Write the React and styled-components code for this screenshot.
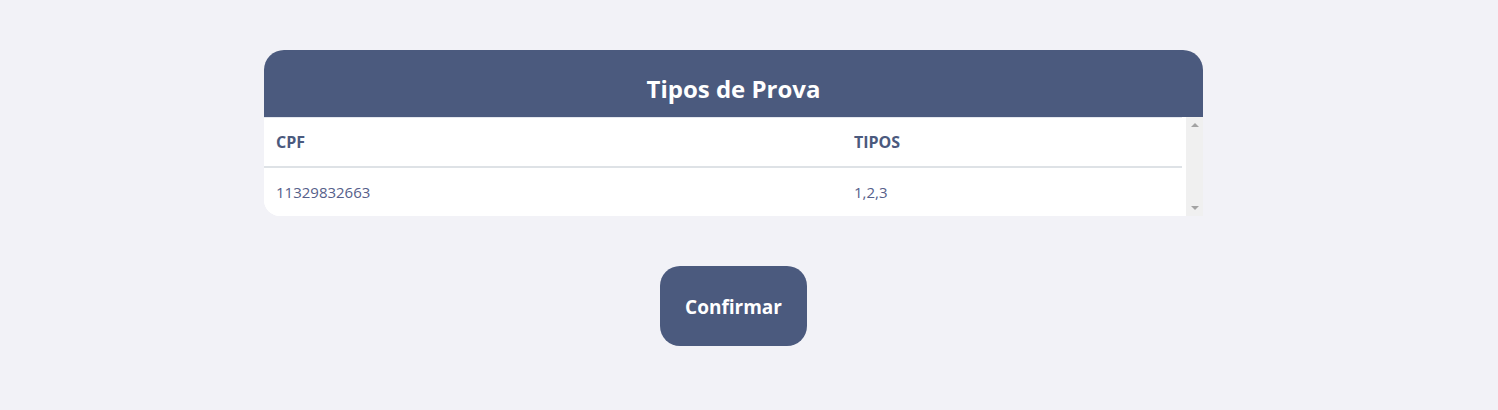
import React from "react";
import styled, { createGlobalStyle } from "styled-components";

const GlobalStyle = createGlobalStyle`
  html, body {
    margin: 0;
    padding: 0;
    background: #f2f2f7;
    font-family: "Open Sans", "Noto Sans", sans-serif;
  }
`;

const Page = styled.main`
  padding: 50px 295px 0 264px;
  display: flex;
  flex-direction: column;
  align-items: center;
`;

const Card = styled.section`
  width: 939px;
  background: #ffffff;
  border-radius: 20px 20px 0 16px;
  overflow: hidden;
`;

const CardHeader = styled.header`
  height: 67px;
  background: #4b5a7e;
  display: flex;
  align-items: center;
  justify-content: center;
`;

const Title = styled.h2`
  margin: 0;
  padding-top: 11px;
  color: #ffffff;
  font-size: 24px;
  font-weight: 700;
  line-height: 1;
`;

const TableFrame = styled.div`
  display: flex;
  height: 99px;
`;

const TableScroll = styled.div`
  flex: 1;
  padding-right: 4px;
  background: #ffffff;
  overflow: hidden;
`;

const Table = styled.table`
  width: 100%;
  border-collapse: collapse;
  color: #4b5a7e;
  font-size: 15px;
`;

const HeadCell = styled.th`
  text-align: left;
  font-size: 16px;
  font-weight: 700;
  height: 49px;
  padding: 1px 12px 0;
  border-top: 1px solid #e4e7ee;
  border-bottom: 2px solid #dee2e6;
  width: ${(p) => p.$width || "auto"};
  box-sizing: border-box;
`;

const BodyCell = styled.td`
  height: 48px;
  padding: 2px 12px 0;
  font-weight: 400;
  color: #56608a;
  box-sizing: border-box;
`;

const ScrollTrack = styled.div`
  width: 17px;
  background: #f0f0f0;
  display: flex;
  flex-direction: column;
  justify-content: space-between;
  align-items: center;
  padding: 6px 0;
  box-sizing: border-box;
`;

const Arrow = styled.span`
  width: 0;
  height: 0;
  border-left: 4px solid transparent;
  border-right: 4px solid transparent;
  ${(p) =>
    p.$down
      ? "border-top: 4px solid #a3a3a3;"
      : "border-bottom: 4px solid #a3a3a3;"}
`;

const ConfirmButton = styled.button`
  margin-top: 50px;
  height: 80px;
  padding: 2px 25px 0;
  border: none;
  border-radius: 20px;
  background: #4b5a7e;
  color: #ffffff;
  font-family: inherit;
  font-size: 19px;
  font-weight: 700;
  cursor: pointer;
`;

const rows = [{ cpf: "11329832663", tipos: "1,2,3" }];

export default function App() {
  return (
    <>
      <GlobalStyle />
      <Page>
        <Card>
          <CardHeader>
            <Title>Tipos de Prova</Title>
          </CardHeader>
          <TableFrame>
            <TableScroll>
              <Table>
                <thead>
                  <tr>
                    <HeadCell $width="578px">CPF</HeadCell>
                    <HeadCell>TIPOS</HeadCell>
                  </tr>
                </thead>
                <tbody>
                  {rows.map((r) => (
                    <tr key={r.cpf}>
                      <BodyCell>{r.cpf}</BodyCell>
                      <BodyCell>{r.tipos}</BodyCell>
                    </tr>
                  ))}
                </tbody>
              </Table>
            </TableScroll>
            <ScrollTrack>
              <Arrow />
              <Arrow $down />
            </ScrollTrack>
          </TableFrame>
        </Card>
        <ConfirmButton>Confirmar</ConfirmButton>
      </Page>
    </>
  );
}
